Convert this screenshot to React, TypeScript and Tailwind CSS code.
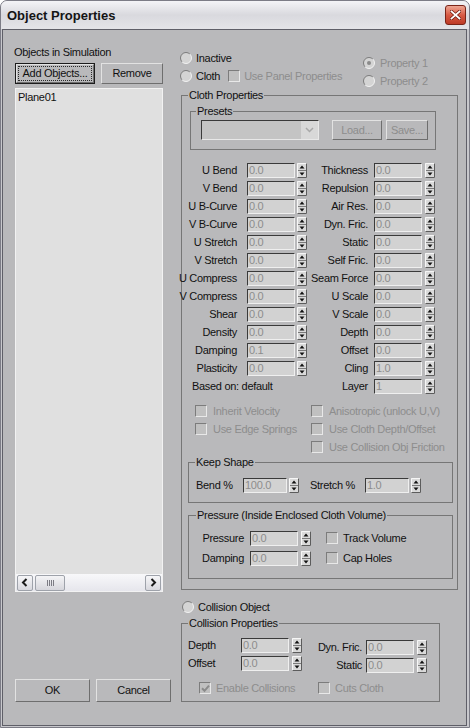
import React from "react";

const EDIT =
  "h-[15px] shrink-0 flex items-center pl-[1px] bg-[#d2d2d2] border border-t-[#3a3a3a] border-l-[#3a3a3a] border-b-[#efefef] border-r-[#efefef] text-[#8d8d8d]";

function Edit({ value, w }: { value: string; w: string }) {
  return <div className={`${EDIT} ${w}`}>{value}</div>;
}

function Spin() {
  return (
    <svg width="10" height="15" viewBox="0 0 10 15" className="block shrink-0">
      <rect x="0" y="0" width="10" height="15" fill="#dadada" />
      <path d="M0.5 14.5 V0.5 H9.5" stroke="#f6f6f6" fill="none" />
      <path d="M0.5 14.5 H9.5 V0.5" stroke="#5c5c5c" fill="none" />
      <path d="M1 7.5 H9" stroke="#7a7a7a" />
      <path d="M5 2.5 L7.5 5.5 H2.5 Z" fill="#111" />
      <path d="M5 12.5 L7.5 9.5 H2.5 Z" fill="#111" />
    </svg>
  );
}

function Radio({ checked }: { checked?: boolean }) {
  return (
    <svg width="12" height="12" viewBox="0 0 12 12" className="block shrink-0">
      <circle cx="6" cy="6" r="5.5" fill="#d4d4d4" />
      <path d="M2.11 9.89 A5.5 5.5 0 0 1 9.89 2.11" stroke="#7c7c7c" fill="none" />
      <path d="M9.89 2.11 A5.5 5.5 0 0 1 2.11 9.89" stroke="#f2f2f2" fill="none" />
      {checked && <circle cx="6" cy="6" r="2" fill="#8a8a8a" />}
    </svg>
  );
}

function Check({ checked }: { checked?: boolean }) {
  return (
    <span className="w-[12px] h-[12px] shrink-0 border border-t-[#7c7c7c] border-l-[#7c7c7c] border-b-[#e8e8e8] border-r-[#e8e8e8] bg-[#c0c0c0] flex items-center justify-center">
      {checked && (
        <svg width="9" height="9" viewBox="0 0 9 9">
          <path d="M1 4.3 L3.5 6.8 L8 1.6" stroke="#8a8a8a" strokeWidth="2" fill="none" />
        </svg>
      )}
    </span>
  );
}

function Group({
  title,
  className,
  legendClass,
  children,
}: {
  title: string;
  className: string;
  legendClass: string;
  children: React.ReactNode;
}) {
  return (
    <fieldset className={`border border-[#767676] min-w-0 ${className}`}>
      <legend className={`px-[1px] leading-[13px] ${legendClass}`}>{title}</legend>
      {children}
    </fieldset>
  );
}

const BTN =
  "border border-t-[#e2e2e2] border-l-[#e2e2e2] border-b-[#6e6e6e] border-r-[#6e6e6e] flex items-center justify-center";

const leftRows: [string, string][] = [
  ["U Bend", "0.0"],
  ["V Bend", "0.0"],
  ["U B-Curve", "0.0"],
  ["V B-Curve", "0.0"],
  ["U Stretch", "0.0"],
  ["V Stretch", "0.0"],
  ["U Compress", "0.0"],
  ["V Compress", "0.0"],
  ["Shear", "0.0"],
  ["Density", "0.0"],
  ["Damping", "0.1"],
  ["Plasticity", "0.0"],
];

const rightRows: [string, string][] = [
  ["Thickness", "0.0"],
  ["Repulsion", "0.0"],
  ["Air Res.", "0.0"],
  ["Dyn. Fric.", "0.0"],
  ["Static", "0.0"],
  ["Self Fric.", "0.0"],
  ["Seam Force", "0.0"],
  ["U Scale", "0.0"],
  ["V Scale", "0.0"],
  ["Depth", "0.0"],
  ["Offset", "0.0"],
  ["Cling", "1.0"],
  ["Layer", "1"],
];

function ScrollArrow({ dir }: { dir: "l" | "r" }) {
  return (
    <div className="w-[16px] h-[16px] shrink-0 rounded-[2px] border border-[#9ea2aa] bg-gradient-to-b from-[#f6f6f8] to-[#d8d8de] flex items-center justify-center">
      <svg width="8" height="9" viewBox="0 0 8 9">
        {dir === "l" ? (
          <path d="M5.5 1 L2 4.5 L5.5 8" stroke="#1a1a1a" strokeWidth="2" fill="none" />
        ) : (
          <path d="M2.5 1 L6 4.5 L2.5 8" stroke="#1a1a1a" strokeWidth="2" fill="none" />
        )}
      </svg>
    </div>
  );
}

export default function App() {
  return (
    <div className="w-[470px] h-[728px] flex flex-col bg-[#c8c8cc] border border-[#7c7c86] rounded-t-[7px] overflow-hidden font-['Liberation_Sans',Arial,sans-serif] text-[11px] leading-[13px] tracking-[-0.3px] text-[#111]">
      {/* Title bar */}
      <div className="h-[28px] shrink-0 flex items-center justify-between pl-[6px] pr-[3px] bg-gradient-to-b from-[#f4f4f7] via-[#d9d9de] to-[#e4e4e8]">
        <span className="font-bold text-[13px] tracking-normal text-[#141414] pt-[1px]">
          Object Properties
        </span>
        <div className="w-[21px] h-[20px] rounded-[3px] border border-[#7a2418] bg-gradient-to-b from-[#eca593] via-[#d85a44] to-[#bd3a26] flex items-center justify-center">
          <svg width="11" height="10" viewBox="0 0 11 10">
            <path d="M1.5 1.5 L9.5 8.5 M9.5 1.5 L1.5 8.5" stroke="#6b1a10" strokeWidth="3.2" strokeLinecap="square" />
            <path d="M1.5 1.5 L9.5 8.5 M9.5 1.5 L1.5 8.5" stroke="#ffffff" strokeWidth="1.8" strokeLinecap="square" />
          </svg>
        </div>
      </div>

      {/* Client area */}
      <div className="flex-1 flex ml-[1px] mr-[2px] mb-[1px] border border-[#5f5f68] bg-[#b9b9bb]">
        {/* Left column */}
        <div className="w-[175px] shrink-0 flex flex-col pl-[11px] pt-[16px]">
          <div>Objects in Simulation</div>
          <div className="mt-[4px] ml-[1px] flex gap-[6px]">
            <div className="w-[80px] h-[21px] border border-[#1c1c1c]">
              <div className={`h-full ${BTN} p-[1px]`}>
                <div className="w-full h-full border border-dotted border-[#2a2a2a] flex items-center justify-center">
                  Add Objects...
                </div>
              </div>
            </div>
            <div className={`w-[62px] h-[21px] ${BTN}`}>Remove</div>
          </div>
          <div className="mt-[4px] ml-[1px] w-[148px] h-[504px] border border-[#f2f2f2] bg-[#e0e0e0] flex flex-col">
            <div className="pl-[2px] pt-[2px]">Plane01</div>
            <div className="mt-auto h-[17px] flex items-center px-[1px] bg-gradient-to-b from-[#f8f8fa] to-[#e6e6ec]">
              <ScrollArrow dir="l" />
              <div className="ml-[2px] w-[30px] h-[16px] rounded-[2px] border border-[#9ea2aa] bg-gradient-to-b from-[#f4f4f6] to-[#d6d6dc] flex items-center justify-center gap-[1px]">
                <span className="w-[1px] h-[6px] bg-[#7c7c84]" />
                <span className="w-[1px] h-[6px] bg-[#7c7c84]" />
                <span className="w-[1px] h-[6px] bg-[#7c7c84]" />
                <span className="w-[1px] h-[6px] bg-[#7c7c84]" />
              </div>
              <div className="flex-1" />
              <ScrollArrow dir="r" />
            </div>
          </div>
          <div className="mt-[87px] ml-[1px] flex gap-[6px]">
            <div className={`w-[75px] h-[23px] ${BTN}`}>OK</div>
            <div className={`w-[75px] h-[23px] ${BTN}`}>Cancel</div>
          </div>
        </div>

        {/* Right column */}
        <div className="flex-1 flex flex-col">
          {/* Top radios */}
          <div className="h-[59px] shrink-0 flex">
            <div className="w-[185px] shrink-0 pl-[2px] pt-[20px]">
              <div className="h-[16px] flex items-center">
                <Radio />
                <span className="ml-[4px]">Inactive</span>
              </div>
              <div className="mt-[2px] h-[16px] flex items-center">
                <Radio />
                <span className="ml-[4px]">Cloth</span>
                <span className="ml-[8px]">
                  <Check />
                </span>
                <span className="ml-[4px] text-[#8d8d8d]">Use Panel Properties</span>
              </div>
            </div>
            <div className="pt-[25px] text-[#8d8d8d]">
              <div className="h-[16px] flex items-center">
                <Radio checked />
                <span className="ml-[5px]">Property 1</span>
              </div>
              <div className="mt-[2px] h-[16px] flex items-center">
                <Radio />
                <span className="ml-[5px]">Property 2</span>
              </div>
            </div>
          </div>

          {/* Cloth Properties */}
          <Group title="Cloth Properties" className="ml-[3px] w-[277px]" legendClass="ml-[6px]">
            <div className="pb-[10px]">
              <Group title="Presets" className="ml-[8px] mt-[3px] w-[246px]" legendClass="ml-[5px]">
                <div className="pl-[10px] pt-[2px] pb-[9px] flex">
                  <div className="w-[118px] h-[20px] flex border border-t-[#3a3a3a] border-l-[#3a3a3a] border-b-[#e8e8e8] border-r-[#e8e8e8] bg-[#c4c4c4]">
                    <div className="flex-1" />
                    <div className="w-[17px] bg-[#d8d8d8] flex items-center justify-center">
                      <svg width="9" height="6" viewBox="0 0 9 6">
                        <path d="M1 1 L4.5 4.5 L8 1" stroke="#a8a8a8" strokeWidth="1.5" fill="none" />
                      </svg>
                    </div>
                  </div>
                  <div className={`ml-[13px] w-[50px] h-[20px] ${BTN} text-[#8d8d8d]`}>Load...</div>
                  <div className={`ml-[4px] w-[42px] h-[20px] ${BTN} text-[#8d8d8d]`}>Save...</div>
                </div>
              </Group>

              {/* Spinner grid */}
              <div className="mt-[11px]">
                {rightRows.map(([rl, rv], i) => (
                  <div key={rl} className="h-[18px] flex items-center">
                    {i < leftRows.length ? (
                      <div className="w-[126px] shrink-0 flex items-center">
                        <span className="w-[65px] shrink-0 pr-[10px] flex justify-end whitespace-nowrap">
                          {leftRows[i][0]}
                        </span>
                        <Edit value={leftRows[i][1]} w="w-[48px]" />
                        <span className="ml-[2px]">
                          <Spin />
                        </span>
                      </div>
                    ) : (
                      <div className="w-[126px] shrink-0 pl-[10px] whitespace-nowrap">Based on: default</div>
                    )}
                    <div className="flex items-center">
                      <span className="w-[66px] shrink-0 pr-[6px] flex justify-end whitespace-nowrap">{rl}</span>
                      <Edit value={rv} w="w-[48px]" />
                      <span className="ml-[3px]">
                        <Spin />
                      </span>
                    </div>
                  </div>
                ))}
              </div>

              {/* Checkboxes */}
              <div className="mt-[7px] pl-[13px] text-[#8d8d8d]">
                <div className="h-[18px] flex items-center">
                  <div className="w-[116px] flex items-center">
                    <Check />
                    <span className="ml-[6px] whitespace-nowrap">Inherit Velocity</span>
                  </div>
                  <Check />
                  <span className="ml-[6px] whitespace-nowrap">Anisotropic (unlock U,V)</span>
                </div>
                <div className="h-[18px] flex items-center">
                  <div className="w-[116px] flex items-center">
                    <Check />
                    <span className="ml-[6px] whitespace-nowrap">Use Edge Springs</span>
                  </div>
                  <Check />
                  <span className="ml-[6px] whitespace-nowrap">Use Cloth Depth/Offset</span>
                </div>
                <div className="h-[18px] flex items-center">
                  <div className="w-[116px]" />
                  <Check />
                  <span className="ml-[6px] whitespace-nowrap">Use Collision Obj Friction</span>
                </div>
              </div>

              {/* Keep Shape */}
              <Group title="Keep Shape" className="ml-[6px] w-[265px]" legendClass="ml-[6px]">
                <div className="pt-[7px] pl-[7px] pb-[8px]">
                  <div className="h-[18px] flex items-center">
                    <span className="w-[47px] shrink-0">Bend %</span>
                    <Edit value="100.0" w="w-[44px]" />
                    <span className="ml-[2px]">
                      <Spin />
                    </span>
                    <span className="ml-[11px] w-[55px] shrink-0">Stretch %</span>
                    <Edit value="1.0" w="w-[44px]" />
                    <span className="ml-[2px]">
                      <Spin />
                    </span>
                  </div>
                </div>
              </Group>

              {/* Pressure */}
              <Group
                title="Pressure (Inside Enclosed Cloth Volume)"
                className="mt-[6px] ml-[6px] w-[265px]"
                legendClass="ml-[7px]"
              >
                <div className="pt-[6px] pb-[10px]">
                  {[
                    ["Pressure", "Track Volume"],
                    ["Damping", "Cap Holes"],
                  ].map(([l, c]) => (
                    <div key={l} className="h-[20px] flex items-center">
                      <span className="w-[61px] shrink-0 pr-[6px] flex justify-end">{l}</span>
                      <Edit value="0.0" w="w-[48px]" />
                      <span className="ml-[3px]">
                        <Spin />
                      </span>
                      <span className="ml-[15px]">
                        <Check />
                      </span>
                      <span className="ml-[5px]">{c}</span>
                    </div>
                  ))}
                </div>
              </Group>
            </div>
          </Group>

          {/* Collision Object */}
          <div className="mt-[9px] h-[16px] pl-[4px] flex items-center">
            <Radio />
            <span className="ml-[4px]">Collision Object</span>
          </div>
          <Group title="Collision Properties" className="ml-[3px] mt-[2px] w-[259px]" legendClass="ml-[6px]">
            <div className="pb-[4px]">
              <div className="flex">
                <div className="pt-[6px] pl-[6px]">
                  {["Depth", "Offset"].map((l) => (
                    <div key={l} className="h-[18px] flex items-center">
                      <span className="w-[53px] shrink-0">{l}</span>
                      <Edit value="0.0" w="w-[48px]" />
                      <span className="ml-[3px]">
                        <Spin />
                      </span>
                    </div>
                  ))}
                </div>
                <div className="pt-[8px]">
                  {["Dyn. Fric.", "Static"].map((l) => (
                    <div key={l} className="h-[18px] flex items-center">
                      <span className="w-[64px] shrink-0 pr-[4px] flex justify-end whitespace-nowrap">{l}</span>
                      <Edit value="0.0" w="w-[48px]" />
                      <span className="ml-[3px]">
                        <Spin />
                      </span>
                    </div>
                  ))}
                </div>
              </div>
              <div className="mt-[5px] h-[18px] pl-[17px] flex items-center text-[#8d8d8d]">
                <div className="w-[119px] flex items-center">
                  <Check checked />
                  <span className="ml-[5px] whitespace-nowrap">Enable Collisions</span>
                </div>
                <Check />
                <span className="ml-[5px]">Cuts Cloth</span>
              </div>
            </div>
          </Group>
        </div>
      </div>
    </div>
  );
}
